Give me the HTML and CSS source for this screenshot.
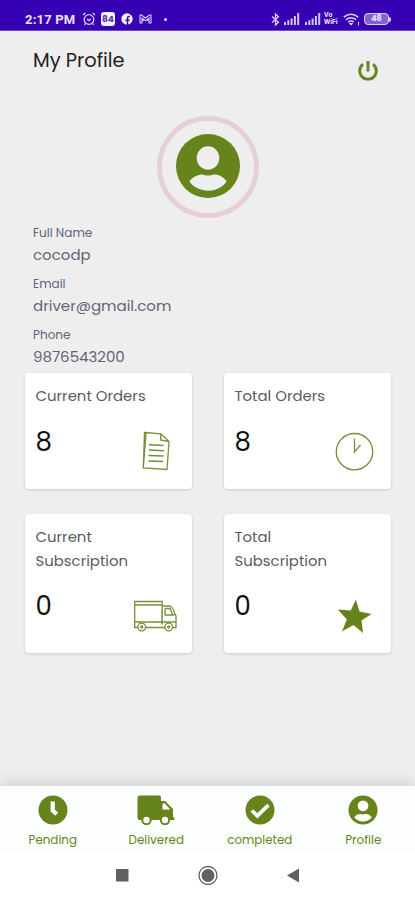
FILE: index.html
```html
<!DOCTYPE html>
<html lang="en">
<head>
  <meta charset="UTF-8" />
  <meta name="viewport" content="width=device-width, initial-scale=1" />
  <title>My Profile</title>
  <link rel="stylesheet" href="styles.css">
</head>
<body>
  <div class="status-bar">
    <span class="time">2:17 PM</span>
    <svg width="14" height="14" viewBox="0 0 14 14" fill="none" stroke="#d9d0f8" stroke-width="1.3">
      <circle cx="7" cy="7.5" r="4.8" />
      <path d="M1 3L3.3 1M13 3L10.7 1M5 7l2 1.6L9 7M3.5 11.5l-1.2 1.3M10.5 11.5l1.2 1.3" />
    </svg>
    <span class="app-badge">84</span>
    <svg class="fb" width="12" height="12" viewBox="0 0 12 12">
      <circle cx="6" cy="6" r="5.7" fill="#f4f1ff" />
      <path d="M6.5 12V7.2M4.5 7.2h4M8.8 3.6H7.9Q6.5 3.6 6.5 5v2.5" fill="none" stroke="#3a00b0" stroke-width="1.5" />
    </svg>
    <svg class="mail" width="13" height="10" viewBox="0 0 13 10" fill="none" stroke="#d9d0f8" stroke-width="1.1">
      <path d="M1 1v8h2V4l3.5 2.6L10 4v5h2V1h-1.5l-4 3-4-3zM3 7l2-1M10 7L8 6" />
    </svg>
    <span class="dot"></span>
    <div class="status-right">
      <svg width="9" height="13" viewBox="0 0 9 13" fill="none" stroke="#d9d0f8" stroke-width="1.3">
        <path d="M1 3.5l6.5 5.8L4.5 12V1l3 2.7L1 9.5" />
      </svg>
      <svg width="17" height="12" viewBox="0 0 17 12" fill="#d0c6f6">
        <path d="M1 9h2v3H1zM4.3 7.3h2V12h-2zM7.6 5.4h2V12h-2zM10.9 3h2v9h-2zM14.2 0h2v12h-2z" />
      </svg>
      <svg width="17" height="12" viewBox="0 0 17 12" fill="#d0c6f6">
        <path d="M1 9h2v3H1zM4.3 7.3h2V12h-2zM7.6 5.4h2V12h-2zM10.9 3h2v9h-2zM14.2 0h2v12h-2z" />
      </svg>
      <div class="vowifi"><span>Vo</span><span>WiFi</span></div>
      <svg width="17" height="13" viewBox="0 0 17 13" fill="none" stroke="#d9d0f8" stroke-width="1.5">
        <path d="M.8 4.2Q8 -1.8 15.2 4.2M3 6.7Q8 2.6 13 6.7M5.3 9.2Q8 7 10.7 9.2" />
        <path d="M6.5 10.5h3L8 12.2zM15.5 9v3.5" stroke-width="1" />
      </svg>
      <div class="battery-wrap"><span class="battery">48</span></div>
    </div>
  </div>

  <header class="header">
    <h1>My Profile</h1>
    <svg class="power" width="22" height="22" viewBox="0 0 22 22" fill="none" stroke="#67841c" stroke-width="2.9">
      <path d="M6 4.2a8.3 8.3 0 1 0 10 0M11 1v10.5" />
    </svg>
  </header>

  <div class="avatar">
    <svg width="64" height="64" viewBox="0 0 64 64">
      <circle cx="32" cy="32" r="32" fill="#67841c" />
      <ellipse cx="32" cy="24" rx="11.3" ry="11.7" fill="#eee" />
      <path d="M13.3 47.5C17 42.5 22 40.5 26 40.5q6 1.8 12 0c5 0 9.5 2.5 12.7 7C46 54 39 56.7 32 56.7S17.5 53.5 13.3 47.5z" fill="#eee" />
    </svg>
  </div>

  <div class="details">
    <div class="field"><label>Full Name</label><p>cocodp</p></div>
    <div class="field"><label>Email</label><p>driver@gmail.com</p></div>
    <div class="field"><label>Phone</label><p>9876543200</p></div>
  </div>

  <div class="cards">
    <div class="card">
      <h3>Current Orders</h3>
      <div class="card-row">
        <span class="count">8</span>
        <svg width="44" height="40" viewBox="0 0 44 40" fill="none" stroke="#75903a" stroke-width="1.3">
          <path d="M10.5 1.5L27 2.8L35 10.5L33 38.5L9.3 37zM27 2.8L26.5 9L35 10.5M9.3 37L12 2" />
          <path d="M15 13.7l14.5.8M15 19l15 .8M14.5 24.5l15 .5M14.5 30l14.5.5" stroke-width="1.6" />
        </svg>
      </div>
    </div>
    <div class="card">
      <h3>Total Orders</h3>
      <div class="card-row">
        <span class="count">8</span>
        <svg width="44" height="40" viewBox="0 0 44 40" fill="none" stroke="#75903a" stroke-width="1.3">
          <circle cx="21.5" cy="20.7" r="18.2" />
          <path d="M21.5 7.5V21L27.5 14" />
        </svg>
      </div>
    </div>
    <div class="card">
      <h3>Current<br>Subscription</h3>
      <div class="card-row">
        <span class="count">0</span>
        <svg width="44" height="40" viewBox="0 0 44 40" fill="none" stroke="#75903a" stroke-width="1.3">
          <path d="M4 31.5H.7V5.5h27.5v23M.7 9h27.5M.7 26h41M11 31.5h20M28 10h8q3 1.5 4.5 7l1.500 3v11.500h-3M32 19h8.500M31 12.500V19h2M31 12.500h5l2.500 6M28 12.500v16" />
          <circle cx="7.7" cy="31" r="3.8" fill="#fff" />
          <circle cx="7.7" cy="31" r="1" />
          <circle cx="34.7" cy="31" r="3.8" fill="#fff" />
          <circle cx="34.7" cy="31" r="1" />
        </svg>
      </div>
    </div>
    <div class="card">
      <h3>Total<br>Subscription</h3>
      <div class="card-row">
        <span class="count">0</span>
        <svg width="44" height="40" viewBox="0 0 44 40" fill="#67841c">
          <path d="M22.8 3.5L26.500 15.500L38.500 18L28.500 24.500L30 37L20.500 29L9 35.500L13.800 23.500L5 13.500L17.800 14.500z" />
        </svg>
      </div>
    </div>
  </div>

  <nav class="tab-bar">
    <a class="tab">
      <svg width="30" height="30" viewBox="0 0 30 30">
        <circle cx="15" cy="15" r="14.5" fill="#67841c" />
        <path d="M14.7 6.5v9l4 3.7" fill="none" stroke="#fff" stroke-width="4.2" />
      </svg>
      <span>Pending</span>
    </a>
    <a class="tab">
      <svg width="38" height="30" viewBox="0 0 38 30">
        <path d="M3 .5h19q2 0 2 2V6h4l8 8v8l1.5 1v2H2.5Q.5 25 .5 23V3Q.5 .5 3 .5z" fill="#67841c" />
        <path d="M25.5 8.5h2.3l5.5 6h-7.8z" fill="#fff" />
        <circle cx="9.5" cy="25" r="4.2" fill="#fff" stroke="#67841c" stroke-width="2" />
        <circle cx="28" cy="25" r="4.2" fill="#fff" stroke="#67841c" stroke-width="2" />
      </svg>
      <span>Delivered</span>
    </a>
    <a class="tab">
      <svg width="30" height="30" viewBox="0 0 30 30">
        <circle cx="15" cy="15" r="14.5" fill="#67841c" />
        <path d="M6.8 15.5l5.5 5.3L23.5 10" fill="none" stroke="#fff" stroke-width="3.8" />
      </svg>
      <span>completed</span>
    </a>
    <a class="tab">
      <svg width="30" height="30" viewBox="0 0 64 64">
        <circle cx="32" cy="32" r="31" fill="#67841c" />
        <circle cx="32" cy="23" r="11.5" fill="#fff" />
        <path d="M13.3 47.5C17 42.5 22 40.5 26 40.5q6 1.8 12 0c5 0 9.5 2.5 12.7 7C46 54 39 56.7 32 56.7S17.5 53.5 13.3 47.5z" fill="#fff" />
      </svg>
      <span>Profile</span>
    </a>
  </nav>

  <div class="system-nav">
    <svg width="13" height="20" viewBox="0 0 13 20"><path d="M0 4h12.5v12.5H0z" fill="#606060" /></svg>
    <svg width="20" height="20" viewBox="0 0 20 20">
      <circle cx="10" cy="10.5" r="9" fill="none" stroke="#606060" stroke-width="1.3" />
      <circle cx="10" cy="10.5" r="6.5" fill="#606060" />
    </svg>
    <svg width="13" height="20" viewBox="0 0 13 20"><path d="M0 10.5L12 3.5v14z" fill="#606060" /></svg>
  </div>
</body>
</html>
```

FILE: styles.css
```css
* {
  box-sizing: border-box;
}
body {
  font-family: Poppins, Inter, sans-serif;
  background: #eeeeee;
  display: flex;
  flex-direction: column;
  width: 415px;
  height: 900px;
  margin: 0;
  overflow: hidden;
}
h1, h3, p {
  margin: 0;
  font-weight: normal;
}
svg {
  display: block;
  flex-shrink: 0;
}
.status-bar {
  height: 31px;
  padding: 8px 24px 0 25px;
  background: #3700b3;
  border-bottom: 1px solid #6c4bc8;
  color: #e9e4fb;
  display: flex;
  align-items: center;
  flex-shrink: 0;
}
.time {
  width: 57px;
  font-family: Roboto, sans-serif;
  font-size: 13px;
  font-weight: bold;
  letter-spacing: 0.2px;
  white-space: nowrap;
}
.app-badge {
  width: 14px;
  height: 14px;
  margin-left: 5px;
  background: #f4f1ff;
  border-radius: 3px;
  color: #5536a8;
  font-size: 9px;
  font-weight: bold;
  line-height: 14px;
  text-align: center;
}
.fb {
  margin-left: 6px;
}
.mail {
  margin-left: 6px;
}
.dot {
  width: 3px;
  height: 3px;
  margin-left: 12px;
  border-radius: 50%;
  background: #e9e4fb;
}
.status-right {
  display: flex;
  align-items: center;
  gap: 3.5px;
  margin-left: auto;
}
.vowifi {
  display: flex;
  flex-direction: column;
  width: 15px;
  font-family: Roboto, sans-serif;
  font-size: 7px;
  font-weight: bold;
  line-height: 7px;
}
.battery-wrap {
  display: flex;
  align-items: center;
  margin-left: 1px;
}
.battery-wrap::after {
  content: "";
  width: 2px;
  height: 5px;
  border-radius: 0 2px 2px 0;
  background: #d9d0f8;
}
.battery {
  width: 25px;
  height: 12px;
  border: 1.5px solid #d9d0f8;
  border-radius: 4px;
  background: #8065d0;
  font-size: 8px;
  font-weight: bold;
  line-height: 10px;
  text-align: center;
}
.header {
  display: flex;
  justify-content: space-between;
  height: 85px;
  padding: 15px 36px 0 33px;
}
.header h1 {
  margin-top: 1px;
  font-size: 19.4px;
  line-height: 28px;
  color: #222222;
}
.power {
  margin-top: 14px;
}
.avatar {
  width: 102px;
  height: 102px;
  margin-left: 157px;
  padding-bottom: 3px;
  border: 5px solid #e5d0d3;
  border-radius: 50%;
  display: flex;
  align-items: center;
  justify-content: center;
  flex-shrink: 0;
}
.details {
  padding: 4.6px 33px 0;
  color: #636379;
}
.field {
  height: 51.2px;
}
.field label {
  display: block;
  font-size: 12px;
  line-height: 19px;
}
.field p {
  margin-top: 1px;
  font-size: 15px;
  line-height: 24px;
}
.cards {
  display: grid;
  grid-template-columns: 167px 167px;
  grid-template-rows: 116px 139px;
  gap: 25px 32px;
  margin: -3.2px 0 0 25px;
}
.card {
  padding: 11.5px 14px 0 10.5px;
  background: #ffffff;
  border-radius: 4px;
  box-shadow: 0 1px 3px rgba(0, 0, 0, 0.15);
}
.card h3 {
  font-size: 14.9px;
  line-height: 23.5px;
  color: #5b5b5f;
}
.card-row {
  display: flex;
  justify-content: space-between;
  margin-top: 19px;
}
.card-row svg {
  margin-top: 4.5px;
}
.count {
  font-size: 26px;
  line-height: 30px;
  color: #111111;
}
.tab-bar {
  display: flex;
  height: 64px;
  margin-top: auto;
  padding: 9px 0 0 1px;
  background: #fcfffd;
  border-bottom: 1px solid #f6f8fa;
  box-shadow: 0 -2px 14px rgba(0, 0, 0, 0.15);
  flex-shrink: 0;
}
.tab {
  flex: 1;
  display: flex;
  flex-direction: column;
  align-items: center;
  color: #67841c;
  font-size: 11.9px;
  line-height: 16px;
}
.tab span {
  margin-top: 7px;
}
.system-nav {
  position: relative;
  display: flex;
  justify-content: center;
  gap: 69px;
  height: 50px;
  padding-top: 15px;
  background: #ffffff;
  flex-shrink: 0;
}
```
